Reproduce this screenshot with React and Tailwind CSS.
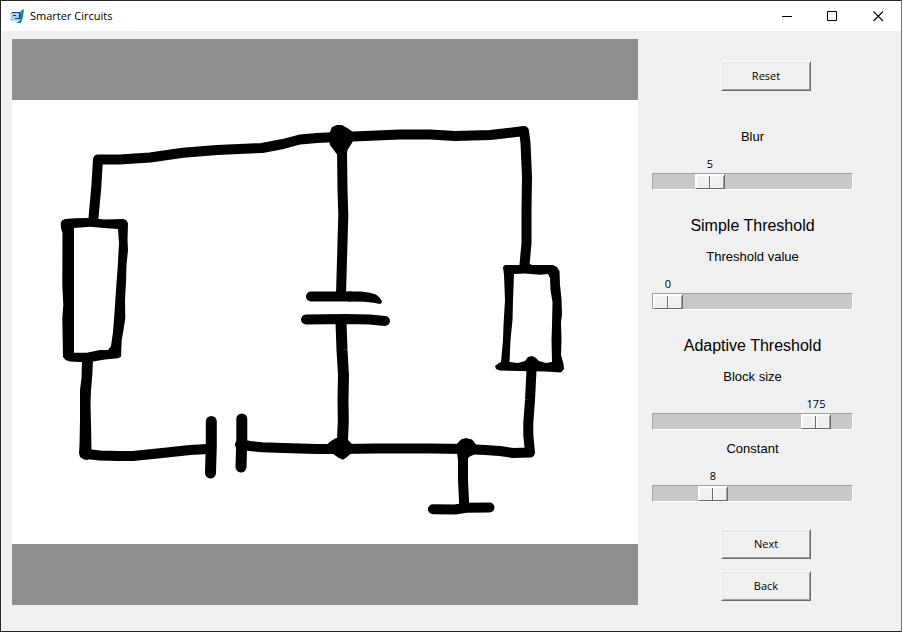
import { useState } from "react";

const uiFont = "font-['Open_Sans',sans-serif] text-[11px] leading-4";

function AppIcon() {
  return (
    <svg width="14" height="14" viewBox="0 0 14 14" aria-hidden="true">
      <path d="M10.5 2 14 0 13 8l-2 6H6l3-2z" fill="#0b8f8d" />
      <path d="M1 3h9v9H1z" fill="#a9d3ee" />
      <path d="M2 3.5h7.5V10" fill="none" stroke="#14388c" strokeWidth="1.2" />
      <path d="M3 6.5h3M5 9.5h4" stroke="#14388c" />
      <path d="M0 4.5h1.5M0 10.5h1.5" stroke="#7fb2d8" />
    </svg>
  );
}

function CaptionButton({ label, children }) {
  return (
    <button type="button" aria-label={label} className="flex w-[46px] items-center justify-center">
      <svg width="11" height="11" viewBox="0 0 11 11" fill="none" stroke="#000" aria-hidden="true">
        {children}
      </svg>
    </button>
  );
}

function TitleBar() {
  return (
    <header className="flex h-[30px] bg-white">
      <div className="flex flex-1 items-center gap-[6px] pl-[9px]">
        <AppIcon />
        <h1 className={`${uiFont} text-black`}>Smarter Circuits</h1>
      </div>
      <CaptionButton label="Minimize">
        <path d="M1 5.5h10" />
      </CaptionButton>
      <CaptionButton label="Maximize">
        <path d="M.5.5h9v9h-9z" />
      </CaptionButton>
      <CaptionButton label="Close">
        <path d="m.5.5 9.5 9.5M10 .5.5 10" strokeWidth="1.1" />
      </CaptionButton>
    </header>
  );
}

function Circuit() {
  return (
    <svg
      viewBox="12 100 626 444"
      className="block w-full bg-white"
      role="img"
      aria-label="Thresholded circuit sketch"
    >
      <g fill="none" stroke="#000" strokeWidth="10" strokeLinecap="round" strokeLinejoin="round">
        <path d="M93.5 218 96.3 187 98 159.5 120 159.5 150 157.5 183 152.7 217 150 250 148.5 262 148 283 144 300 139.5 317 138 337 137" />
        <path d="M340 137 353 136.5 400 134.5 430 134.5 455 136 490 135 508 133 524 131 525.5 143 527 177 526.5 210 526.5 243 524.5 265" />
        <path d="M342 150 342.5 190 343.3 215 342.5 243 341 294" />
        <path d="M311 296.5H350" />
        <path d="M306 319.5 345 319 370 319.5 385 321" />
        <path d="M341 322 342 350 343.5 375 343 400 343.3 420 342.3 446" strokeWidth="11" />
        <path d="M86 454 100 455.5 118 456 133 456 167 452.5 190 450 208 449" />
        <path d="M211.3 421.5 211.3 445 210.5 473" strokeWidth="11" />
        <path d="M241.8 419 241.8 440 241 467" strokeWidth="11" />
        <path d="M240 444.5 250 446 262 447.3 283 448 317 449 342 449 375 448.5 430 448.5 466 449 485 450 500 451 513 453 530 452.5 528.3 435 528.3 423 530 400 531.7 366" />
        <path d="M463 450 463 480 464.2 505" />
        <path d="M433 509.3 455 509.5 466 507.8 489.5 507.5" />
      </g>
      <path d="M348 291.5H361L370 292.7 376 294.5 380 298 382 301.5 381 303.8 378.5 303.8 374 302.7 364 301.7 348 301.5Z" />
      <path d="M82 360H93L92.3 375 91 390 90.5 405 91 423 91.5 452 88 460 84 459.5 80 457 79 453 79.5 445 80 420 80 390 81.5 378Z" />
      <path d="M331.7 127.3 336.7 125 342 125 349.3 129.3 353.3 132.7 352.7 141.7 347.5 150 346.7 154 336.7 154 330 145 328.3 137Z" />
      <path d="M326.7 444.7 331 441 336 438 347 439 352 444 352 452.5 347 457 343 459.7 338 457.5 332 453 326.7 452Z" />
      <path d="M456 445 461 439.5 466 438 472 439.5 476 444.5 475 454 469 457 467 460 458 460 457 453Z" />
      <path
        fillRule="evenodd"
        d="M60.7 223 62 220.5 65 219 75 218.3 88 218 105 219.5 123 219 126 220 128 223 127.5 240 128 250 126.5 265 126 282 125 300 125.3 318 123.5 330 121.7 340 121 356.7 118 358.3 105 359.5 93 361.5 80 362 70 361.5 65.5 360 63 357 62.7 340 62.3 318 63.3 305 62.3 285 62.5 233 61 228ZM74 228 90 226.7 104 228 118 229 119 243 117.7 267 116 290 114.7 310 113 332 111 346 108 350 100 350 86.7 352.7 74 352.7Z"
      />
      <path
        fillRule="evenodd"
        d="M503 267 505 265 520 265 528 263 532 265 553 265 557 267 559.5 271 560 285 561.5 299 562 315 561 322 561.5 340 561 355 563.5 364 564 369 561 372.5 545 371.5 500 370.5 496 369 495 366 499 363 501 362 503 340 503.5 325 505 300 504 275ZM514 274 525 273.5 540 274.7 548 274 550 278 550.5 290 552.5 302 552 325 551.5 340 552 362 546 363 539 361 536 358 532 356 528 357 525 361 518 363 509.5 362 510.5 340 512.5 320 513 300Z"
      />
    </svg>
  );
}

function PushButton({ children }) {
  return (
    <button
      type="button"
      className={`${uiFont} h-[30px] w-[90px] border border-t-white border-l-white border-r-[#696969] border-b-[#696969] bg-[#f0f0f0] text-black shadow-[inset_1px_1px_0_#e3e3e3,inset_-1px_-1px_0_#a0a0a0]`}
    >
      {children}
    </button>
  );
}

function SliderField({ id, label, max, initial }) {
  const [value, setValue] = useState(initial);
  const travel = 169;
  return (
    <div className="flex flex-col">
      <label htmlFor={id} className="text-center text-[13px] leading-5">
        {label}
      </label>
      <output
        htmlFor={id}
        className={`${uiFont} mt-[9px] w-8 text-center`}
        style={{ marginLeft: Math.round((value / max) * travel) }}
      >
        {value}
      </output>
      <input
        id={id}
        type="range"
        min="0"
        max={max}
        value={value}
        onChange={(e) => setValue(Number(e.target.value))}
        className="mt-px block h-[17px] w-full appearance-none border border-t-[#a0a0a0] border-l-[#a0a0a0] border-r-white border-b-white bg-[#c8c8c8] [&::-webkit-slider-thumb]:h-[15px] [&::-webkit-slider-thumb]:w-[30px] [&::-webkit-slider-thumb]:appearance-none [&::-webkit-slider-thumb]:border [&::-webkit-slider-thumb]:border-t-white [&::-webkit-slider-thumb]:border-l-white [&::-webkit-slider-thumb]:border-r-[#696969] [&::-webkit-slider-thumb]:border-b-[#696969] [&::-webkit-slider-thumb]:bg-[linear-gradient(90deg,#f0f0f0_13px,#696969_13px,#696969_14px,#fff_14px,#fff_15px,#f0f0f0_15px)] [&::-webkit-slider-thumb]:shadow-[inset_1px_1px_0_#fff,inset_-1px_0_0_#a0a0a0]"
      />
    </div>
  );
}

export default function App() {
  return (
    <div className="flex min-h-screen flex-col border border-[#252428] border-r-[#707070] bg-[#f0f0f0] font-['Liberation_Sans',Arial,sans-serif] text-black">
      <TitleBar />
      <main className="flex flex-1 pt-2 pb-[26px] pl-[11px]">
        <section className="flex flex-1 items-center bg-[#8f8f8f]">
          <Circuit />
        </section>
        <aside className="flex w-[263px] flex-none flex-col pt-[22px] pr-[7px]">
          <div className="flex justify-center">
            <PushButton>Reset</PushButton>
          </div>
          <div className="mt-9 ml-[14px] flex w-[201px] flex-col">
            <SliderField id="blur" label="Blur" max={20} initial={5} />
            <h2 className="mt-[26px] mb-[11px] text-center text-base leading-5">Simple Threshold</h2>
            <SliderField id="threshold" label="Threshold value" max={255} initial={0} />
            <h2 className="mt-[26px] mb-[11px] text-center text-base leading-5">Adaptive Threshold</h2>
            <div className="flex flex-col gap-[9px]">
              <SliderField id="block" label="Block size" max={200} initial={175} />
              <SliderField id="constant" label="Constant" max={30} initial={8} />
            </div>
          </div>
          <div className="mt-[27px] flex flex-col items-center gap-3">
            <PushButton>Next</PushButton>
            <PushButton>Back</PushButton>
          </div>
        </aside>
      </main>
    </div>
  );
}
